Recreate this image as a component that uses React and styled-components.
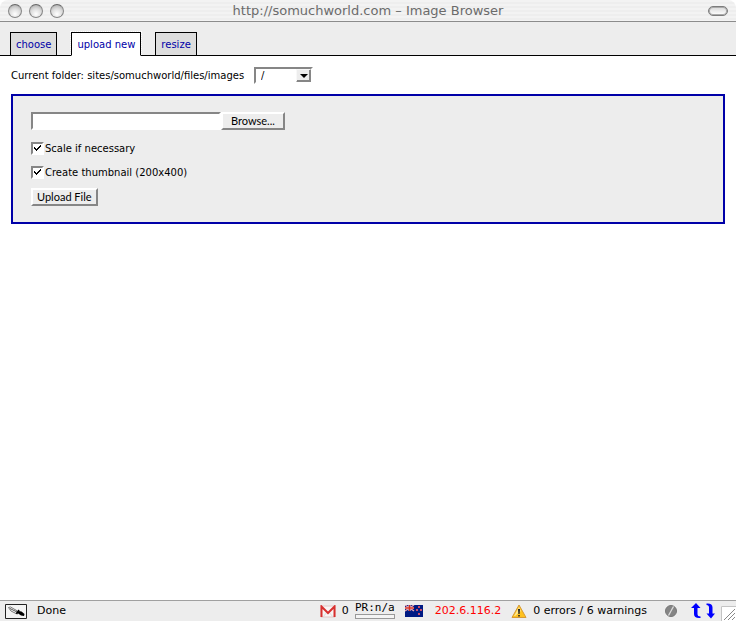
import styled, { createGlobalStyle } from 'styled-components'

const GlobalStyle = createGlobalStyle`
    *{
        box-sizing: border-box;
    }
    body{
        margin: 0;
        background-color: #fff;
        color: #000;
        font-family: "DejaVu Sans", Verdana, sans-serif;
        font-size: 10px;
    }
    button, input, select{
        font: inherit;
        color: inherit;
    }
    svg{
        display: block;
        flex: none;
    }
`

const Window = styled.div`
    display: flex;
    flex-direction: column;
    min-height: 100vh;
`

const TitleBar = styled.header`
    display: flex;
    align-items: center;
    justify-content: space-between;
    height: 22px;
    padding: 0 8px;
    border-bottom: 1px solid #8c8c8c;
    border-radius: 8px 8px 0 0;
    background: repeating-linear-gradient(#f3f3f3 0 2px, #eee 2px 4px);
`

const Title = styled.h1`
    margin: 0;
    color: #6b6b6b;
    font-size: 13px;
    font-weight: 400;
    line-height: 20px;
`

const Lights = styled.div`
    display: flex;
    flex: 1;
    gap: 7px;
`

const Light = styled.button`
    width: 14px;
    height: 14px;
    padding: 0;
    border: 1px solid #868686;
    border-top-color: #666;
    border-radius: 50%;
    background: radial-gradient(circle at 50% 75%, #fff, #dcdcdc 50%, #a0a0a0);
`

const PillSide = styled.div`
    display: flex;
    flex: 1;
    justify-content: flex-end;
`

const Pill = styled.button`
    width: 20px;
    height: 10px;
    padding: 0;
    border: 1px solid #7c7c7c;
    border-radius: 5px;
    background: linear-gradient(#d8d8d8, #fff);
    box-shadow: inset 0 0 0 1px #aaa;
`

const TabBar = styled.nav`
    display: flex;
    gap: 14px;
    padding: 10px 10px 0;
    border-bottom: 1px solid #000;
    background-color: #ededed;
`

const Tab = styled.a`
    height: 24px;
    margin-bottom: -1px;
    padding: 0 5px;
    border: 1px solid #000;
    border-bottom-color: ${({ $active }) => ($active ? '#fff' : '#000')};
    outline: ${({ $active }) => ($active ? '1px dotted #fff' : 'none')};
    background-color: ${({ $active }) => ($active ? '#fff' : '#ddd')};
    color: #0000a8;
    line-height: 23px;
    text-decoration: none;
`

const Content = styled.main`
    flex: 1;
    padding: 11px;
`

const Folder = styled.div`
    display: flex;
    align-items: center;
    gap: 10px;
    height: 17px;
    margin-bottom: 10px;
`

const SelectWrap = styled.span`
    display: grid;
    align-items: center;
    width: 59px;
    height: 17px;
    border: 2px solid;
    border-color: #868686 #fff #fff #868686;
    & > *{
        grid-area: 1 / 1;
    }
`

const Select = styled.select`
    width: 100%;
    height: 13px;
    padding: 0 5px;
    border: 0;
    appearance: none;
    background-color: #fff;
`

const Arrow = styled.span`
    display: flex;
    align-items: center;
    justify-content: center;
    justify-self: end;
    width: 15px;
    height: 13px;
    border: 1px solid;
    border-color: #f8f8f8 #868686 #868686 #f8f8f8;
    background-color: #ededed;
    box-shadow: inset -1px -1px #868686;
    pointer-events: none;
`

const UploadForm = styled.form`
    display: flex;
    flex-direction: column;
    align-items: flex-start;
    padding: 16px 18px;
    border: 2px solid #0000a8;
    background-color: #ededed;
`

const FileRow = styled.div`
    display: flex;
    margin-bottom: 10px;
`

const FileName = styled.input`
    width: 190px;
    height: 18px;
    border: 2px solid;
    border-color: #868686 #fff #fff #868686;
    background-color: #fff;
`

const Button = styled.button`
    height: 18px;
    padding: 0 ${({ $wide }) => ($wide ? 8 : 4)}px;
    border: 2px solid;
    border-color: #fff #868686 #868686 #fff;
    background-color: #ededed;
    font-family: Lato, sans-serif;
    font-size: 11px;
    line-height: 14px;
`

const CheckRow = styled.label`
    display: flex;
    align-items: center;
    gap: 1px;
    height: 16px;
    margin-bottom: 8px;
`

const CheckBox = styled.span`
    display: grid;
    place-items: center;
    & > *{
        grid-area: 1 / 1;
    }
    & svg{
        visibility: hidden;
        pointer-events: none;
    }
    & input:checked + svg{
        visibility: visible;
    }
`

const Checkbox = styled.input`
    width: 13px;
    height: 13px;
    margin: 0;
    border: 2px solid;
    border-color: #868686 #fff #fff #868686;
    appearance: none;
    background-color: #fff;
`

const StatusBar = styled.footer`
    display: flex;
    align-items: center;
    gap: 10px;
    height: 21px;
    padding-left: 5px;
    border-top: 1px solid #a0a0a0;
    background-color: #ededed;
    font-size: 11px;
    line-height: 18px;
    white-space: nowrap;
`

const Done = styled.span`
    flex: 1;
`

const StatusItem = styled.span`
    display: flex;
    align-items: center;
    gap: ${({ $gap }) => $gap || 6}px;
    color: ${({ $color }) => $color || 'inherit'};
`

const Tools = styled.span`
    display: flex;
    align-items: center;
    gap: 14px;
    padding-left: 8px;
`

const Rank = styled.span`
    display: flex;
    flex-direction: column;
    align-items: flex-end;
    gap: 1px;
    font-family: "DejaVu Sans Mono", monospace;
    font-size: 11px;
    line-height: 10px;
`

const RankBar = styled.span`
    width: 40px;
    height: 5px;
    border: 1px solid #999;
    background-color: #f4f4f4;
`

const GripCorner = styled.span`
    align-self: flex-end;
    margin-left: -4px;
`

function Dropper(){
    return(
        <svg width="22" height="15" viewBox="0 0 22 15">
            <path d="M.5.5h21v14H.5z" fill="#f4f4f4" stroke="#222" />
            <path d="M3.5 3.5l2-.5 7 4-1.500 2.500-5-2.500z" fill="#fff" stroke="#777" />
            <path d="M5 4.500l7 3.500" stroke="#555" />
            <path d="M14 6l-2.500 4" stroke="#000" strokeWidth="1.5" />
            <path d="M13.500 7l3 .5 3 2.500-.5 2-3-.5-3.500-2.500z" fill="#000" />
        </svg>
    )
}

function Gmail(){
    return(
        <svg width="16" height="13" viewBox="0 0 16 13">
            <path d="M1 1h14v11H1z" fill="#f8f5f5" stroke="#e3c6c6" />
            <path d="M3 12l4-5M13 12L9 7" stroke="#ddd" />
            <path d="M1.500 12V1.500L8 8l6.500-6.500V12" fill="none" stroke="#d8302f" strokeWidth="2" />
        </svg>
    )
}

function Flag(){
    return(
        <svg width="18" height="12" viewBox="0 0 18 12">
            <path d="M0 0h18v12H0z" fill="#001a83" />
            <path d="M0 0l9 6M9 0L0 6" stroke="#e5a6b4" strokeWidth="1.4" />
            <path d="M4.500 0v6M0 3h9" stroke="#fff" strokeWidth="2" />
            <path d="M4.500 0v6M0 3h9" stroke="#d52b1e" strokeWidth="1.4" />
            <path d="M13 1h2v2h-2zM11 4h2v2h-2zM15 4h2v2h-2zM13 8h2v2h-2z" fill="#c8506e" />
        </svg>
    )
}

function Warning(){
    return(
        <svg width="16" height="15" viewBox="0 0 16 15">
            <path d="M8 1l7 12.500H1z" fill="#ffc21e" stroke="#d69a35" strokeLinejoin="round" />
            <path d="M8 3l2 4-6 5H3z" fill="#ffe991" />
            <path d="M7 5h2l-.4 5H7.400zM7.200 11h1.600v1.500H7.200z" fill="#222" />
        </svg>
    )
}

function Blocked(){
    return(
        <svg width="12" height="12" viewBox="0 0 12 12">
            <circle cx="6" cy="6" r="5.500" fill="#858585" stroke="#777" />
            <path d="M3.500 10.500l5-9" stroke="#ddd" strokeWidth="1.3" />
        </svg>
    )
}

function Arrows(){
    return(
        <svg width="24" height="16" viewBox="0 0 24 16" fill="#00f">
            <path d="M5 0l4.500 5H6.500v6q0 2.500 3 2.500V15Q3 15.500 3 11V5H0z" />
            <path d="M20 15.500l4-5h-2.500V4.500Q21.500 0 15.500.5V2q2.500 0 2.500 2.500v6h-2.500z" />
        </svg>
    )
}

function Grip(){
    return(
        <svg width="15" height="15" viewBox="0 0 15 15">
            <path d="M0 0h15v15H0z" fill="#fff" />
            <path d="M.5 15V.5H15" fill="none" stroke="#c4c4c4" />
            <path d="M3 14L14 3M7 14l7-7M11 14l3-3" stroke="#888" />
        </svg>
    )
}

function Check({ id, children }){
    return(
        <CheckRow htmlFor={id}>
            <CheckBox>
                <Checkbox id={id} type="checkbox" defaultChecked />
                <svg width="7" height="7" viewBox="0 0 7 7" shapeRendering="crispEdges">
                    <path d="M0 2h1v1h1v1h1v-1h1v-1h1v-1h1v-1h1v2h-1v1h-1v1h-1v1h-1v1h-1v-1h-1v-1h-1z" />
                </svg>
            </CheckBox>
            {children}
        </CheckRow>
    )
}

function App(){
    return(
        <>
            <GlobalStyle />
            <Window>
                <TitleBar>
                    <Lights>
                        <Light aria-label="Close" />
                        <Light aria-label="Minimize" />
                        <Light aria-label="Zoom" />
                    </Lights>
                    <Title>http://somuchworld.com – Image Browser</Title>
                    <PillSide><Pill aria-label="Toolbar" /></PillSide>
                </TitleBar>
                <TabBar>
                    <Tab href="#choose">choose</Tab>
                    <Tab href="#upload" $active>upload new</Tab>
                    <Tab href="#resize">resize</Tab>
                </TabBar>
                <Content>
                    <Folder>
                        <label htmlFor="folder">Current folder: sites/somuchworld/files/images</label>
                        <SelectWrap>
                            <Select id="folder"><option>/</option></Select>
                            <Arrow>
                                <svg width="8" height="4"><path d="M0 0h8L4 4z" /></svg>
                            </Arrow>
                        </SelectWrap>
                    </Folder>
                    <UploadForm>
                        <FileRow>
                            <FileName type="text" aria-label="File" />
                            <Button type="button" $wide>Browse...</Button>
                        </FileRow>
                        <Check id="scale">Scale if necessary</Check>
                        <Check id="thumb">Create thumbnail (200x400)</Check>
                        <Button type="button">Upload File</Button>
                    </UploadForm>
                </Content>
                <StatusBar>
                    <Dropper />
                    <Done>Done</Done>
                    <StatusItem>
                        <Gmail />
                        <span>0</span>
                        <Rank>
                            PR:n/a
                            <RankBar />
                        </Rank>
                    </StatusItem>
                    <StatusItem $gap={12} $color="#f00">
                        <Flag />
                        <span>202.6.116.2</span>
                    </StatusItem>
                    <StatusItem>
                        <Warning />
                        <span>0 errors / 6 warnings</span>
                    </StatusItem>
                    <Tools>
                        <Blocked />
                        <Arrows />
                    </Tools>
                    <GripCorner><Grip /></GripCorner>
                </StatusBar>
            </Window>
        </>
    )
}

export default App
